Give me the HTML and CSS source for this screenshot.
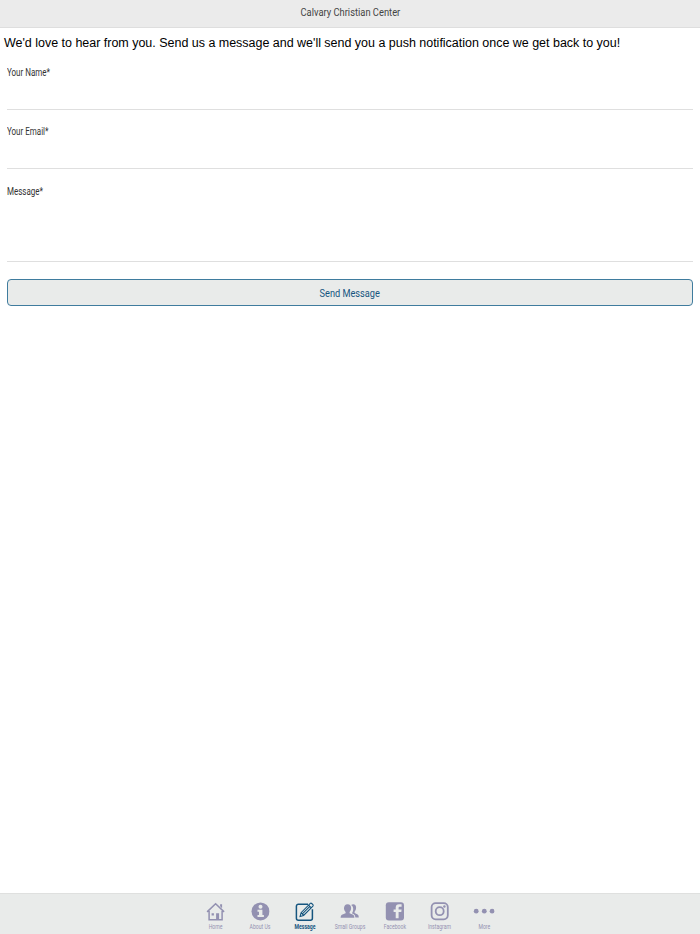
FILE: index.html
```html
<!DOCTYPE html>
<html lang="en">
<head>
<meta charset="utf-8">
<title>Calvary Christian Center</title>
<link rel="stylesheet" href="styles.css">
</head>
<body>
<header class="topbar"><h1 class="condensed">Calvary Christian Center</h1></header>
<main>
  <p class="intro">We'd love to hear from you. Send us a message and we'll send you a push notification once we get back to you!</p>
  <form class="form">
    <label class="field"><span class="condensed">Your Name*</span><input type="text"></label>
    <label class="field"><span class="condensed">Your Email*</span><input type="email"></label>
    <label class="field message"><span class="condensed">Message*</span><textarea></textarea></label>
    <button type="button" class="send"><span class="condensed">Send Message</span></button>
  </form>
</main>
<nav class="tabs">
  <a class="tab"><svg viewBox="0 0 20 20"><path d="M1.500 10.700 10 2.500l8.500 8.200M3.500 9.700v8.800h13V9.700" fill="none" stroke="currentColor" stroke-width="1.500"/><path d="M14.500 3h2v4l-2-2zM10.500 12h3v6.500h-3zM6 12h2.300v2.300H6z" fill="currentColor"/></svg><span class="condensed">Home</span></a>
  <a class="tab"><svg viewBox="0 0 20 20"><circle cx="10.900" cy="10.200" r="9" fill="currentColor"/><circle cx="10.900" cy="5.500" r="2" fill="#e9ebea"/><path d="M7.900 8.500h4.900v5.300h1.500v2H7.900v-2h1.500v-3.300H7.900z" fill="#e9ebea"/></svg><span class="condensed">About Us</span></a>
  <a class="tab active"><svg viewBox="0 0 20 20"><path d="M13.500 3H3.800a2 2 0 0 0-2 2v12a2 2 0 0 0 2 2h12a2 2 0 0 0 2-2V8" fill="none" stroke="currentColor" stroke-width="1.500"/><path d="m5.500 15.300 1-3.800L15.700 2.200q.7-.5 1.400.1l1.200 1.200q.6.700 0 1.400L9 14.200zM14 3.900l2.700 2.700M6.500 11.500 9 14.200M8 12.500l7.500-7.500" fill="none" stroke="currentColor" stroke-width="1.100"/></svg><span class="condensed">Message</span></a>
  <a class="tab"><svg viewBox="0 0 20 20"><path d="M11.500 3.700c3-1.500 5.300.3 5 3.200-.1 1.800-.9 2.800-1.500 3.600v1.400l3 1.300q1.200.6 1.200 3.100h-3.400q-.2-2.600-1.500-3.300l-2-1c1.500-2 2.300-6.300-.8-8.300z" fill="currentColor"/><path d="M8 3c2.500 0 3.800 1.900 3.500 4.400-.1 1.600-.8 2.600-1.500 3.400v1.200l3.500 1.500q1.300.6 1.300 3H1q0-2.300 1.300-3L6 12v-1.200c-.8-.8-1.500-1.800-1.600-3.400C4.200 4.900 5.600 3 8 3z" fill="currentColor"/></svg><span class="condensed">Small Groups</span></a>
  <a class="tab"><svg viewBox="0 0 20 20"><rect x="1.200" y="1" width="18.200" height="18.200" rx="3" fill="currentColor"/><path d="M17 5.500h-2q-1 0-1 1.100v1.700h3l-.3 2.600H14V17h-2.900v-6.100H9V8.300h2.100V6.400q0-3.400 3.300-3.400H17z" fill="#e9ebea"/></svg><span class="condensed">Facebook</span></a>
  <a class="tab"><svg viewBox="0 0 20 20"><g fill="none" stroke="currentColor" stroke-width="1.800"><rect x="2" y="1.900" width="16.200" height="16.200" rx="4"/><circle cx="10.100" cy="10" r="4"/></g><circle cx="14.800" cy="5.300" r="1.200" fill="currentColor"/></svg><span class="condensed">Instagram</span></a>
  <a class="tab"><svg class="dots" viewBox="0 0 22 20"><g fill="currentColor"><circle cx="3.600" cy="10" r="2.400"/><circle cx="11.700" cy="10" r="2.400"/><circle cx="19.500" cy="10" r="2.400"/></g></svg><span class="condensed">More</span></a>
</nav>
</body>
</html>
```
FILE: styles.css
```css
* { box-sizing: border-box; }
body {
  margin: 0;
  height: 934px;
  display: flex;
  flex-direction: column;
  overflow: hidden;
  background: #fff;
  font-family: Roboto, "Liberation Sans", sans-serif;
}
.condensed { display: inline-block; transform: scaleX(.8); }
.topbar {
  height: 28px;
  background: #ebebeb;
  border-bottom: 1px solid #dedede;
  display: flex;
  justify-content: center;
}
.topbar h1 {
  margin: 0;
  font-size: 11.700px;
  font-weight: 400;
  line-height: 25px;
  color: #444;
  white-space: nowrap;
}
main { flex: 1; }
.intro {
  margin: 0;
  padding: 6px 4px 0;
  height: 37px;
  font: 12.500px/18px "Liberation Sans", Arial, sans-serif;
  letter-spacing: -.018px;
  color: #000;
  white-space: nowrap;
}
.form { padding: 0 7px; }
.field {
  display: flex;
  flex-direction: column;
  align-items: flex-start;
  height: 45px;
  padding-top: 1px;
  margin-bottom: 14.400px;
  border-bottom: 1px solid #dfdfdf;
  font-size: 10px;
  line-height: 13px;
  color: #333;
}
.field .condensed { transform-origin: left; }
.field input, .field textarea {
  width: 100%;
  flex: 1;
  min-height: 0;
  border: 0;
  padding: 0;
  outline: 0;
  resize: none;
  background: none;
}
.field.message { height: 78px; margin-bottom: 17.200px; }
.send {
  display: block;
  width: 100%;
  height: 27.500px;
  padding: 0;
  border: 1px solid #3f7c9e;
  border-radius: 4px;
  background: #e9ebea;
  color: #15557f;
  font: 11.500px/26px Roboto, sans-serif;
}
.tabs {
  height: 41px;
  padding-top: 7px;
  border-top: 1px solid #dfe0df;
  background: #e9ebea;
  display: flex;
  justify-content: center;
}
.tab {
  width: 44.800px;
  display: flex;
  flex-direction: column;
  align-items: center;
  color: #9391b1;
  font-size: 6.400px;
  line-height: 8px;
  white-space: nowrap;
}
.tab svg { width: 20px; height: 20px; flex: none; transform: translate(-.4px, .2px); }
.tab .dots { width: 22px; }
.tab .condensed { margin-top: 2px; }
.tab.active { color: #15557f; font-weight: 700; }
```
